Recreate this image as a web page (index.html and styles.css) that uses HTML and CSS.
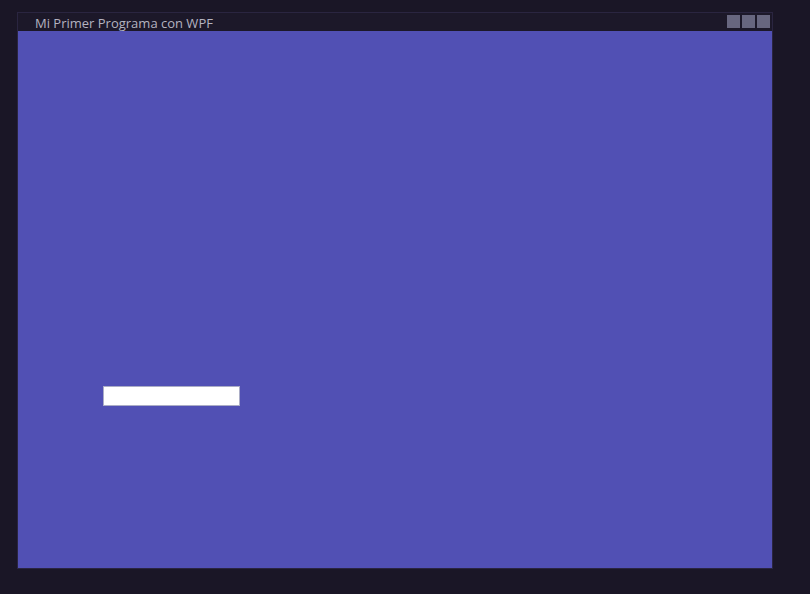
FILE: index.html
```html
<!DOCTYPE html>
<html>
<head>
<meta charset="utf-8">
<link rel="stylesheet" href="styles.css">
</head>
<body>
<div class="window">
  <div class="titlebar">
    <span class="title">Mi Primer Programa con WPF</span>
    <div class="buttons">
      <span class="btn"></span>
      <span class="btn"></span>
      <span class="btn"></span>
    </div>
  </div>
  <div class="content">
    <div class="textbox"></div>
  </div>
</div>
</body>
</html>
```
FILE: styles.css
```css
html, body {
  margin: 0;
  padding: 0;
  background: #1a1626;
  width: 810px;
  height: 594px;
  overflow: hidden;
}
.window {
  margin: 12px 0 0 17px;
  width: 754px;
  height: 555px;
  border: 1px solid #2a2540;
  display: flex;
  flex-direction: column;
  background: #1c1829;
}
.titlebar {
  height: 18px;
  display: flex;
  align-items: center;
  justify-content: space-between;
  padding: 0 2px 0 17px;
}
.title {
  font-family: "Open Sans", "Noto Sans", sans-serif;
  font-size: 13px;
  color: #b4b3c0;
  line-height: 18px;
  margin-top: 1px;
}
.buttons {
  display: flex;
  gap: 2px;
  align-self: flex-start;
  margin-top: 2px;
}
.btn {
  width: 13px;
  height: 13px;
  background: #67667f;
}
.content {
  flex: 1;
  background: #5150b4;
  padding: 355px 0 0 85px;
}
.textbox {
  width: 135px;
  height: 18px;
  background: #ffffff;
  border: 1px solid #abadc6;
}
```
